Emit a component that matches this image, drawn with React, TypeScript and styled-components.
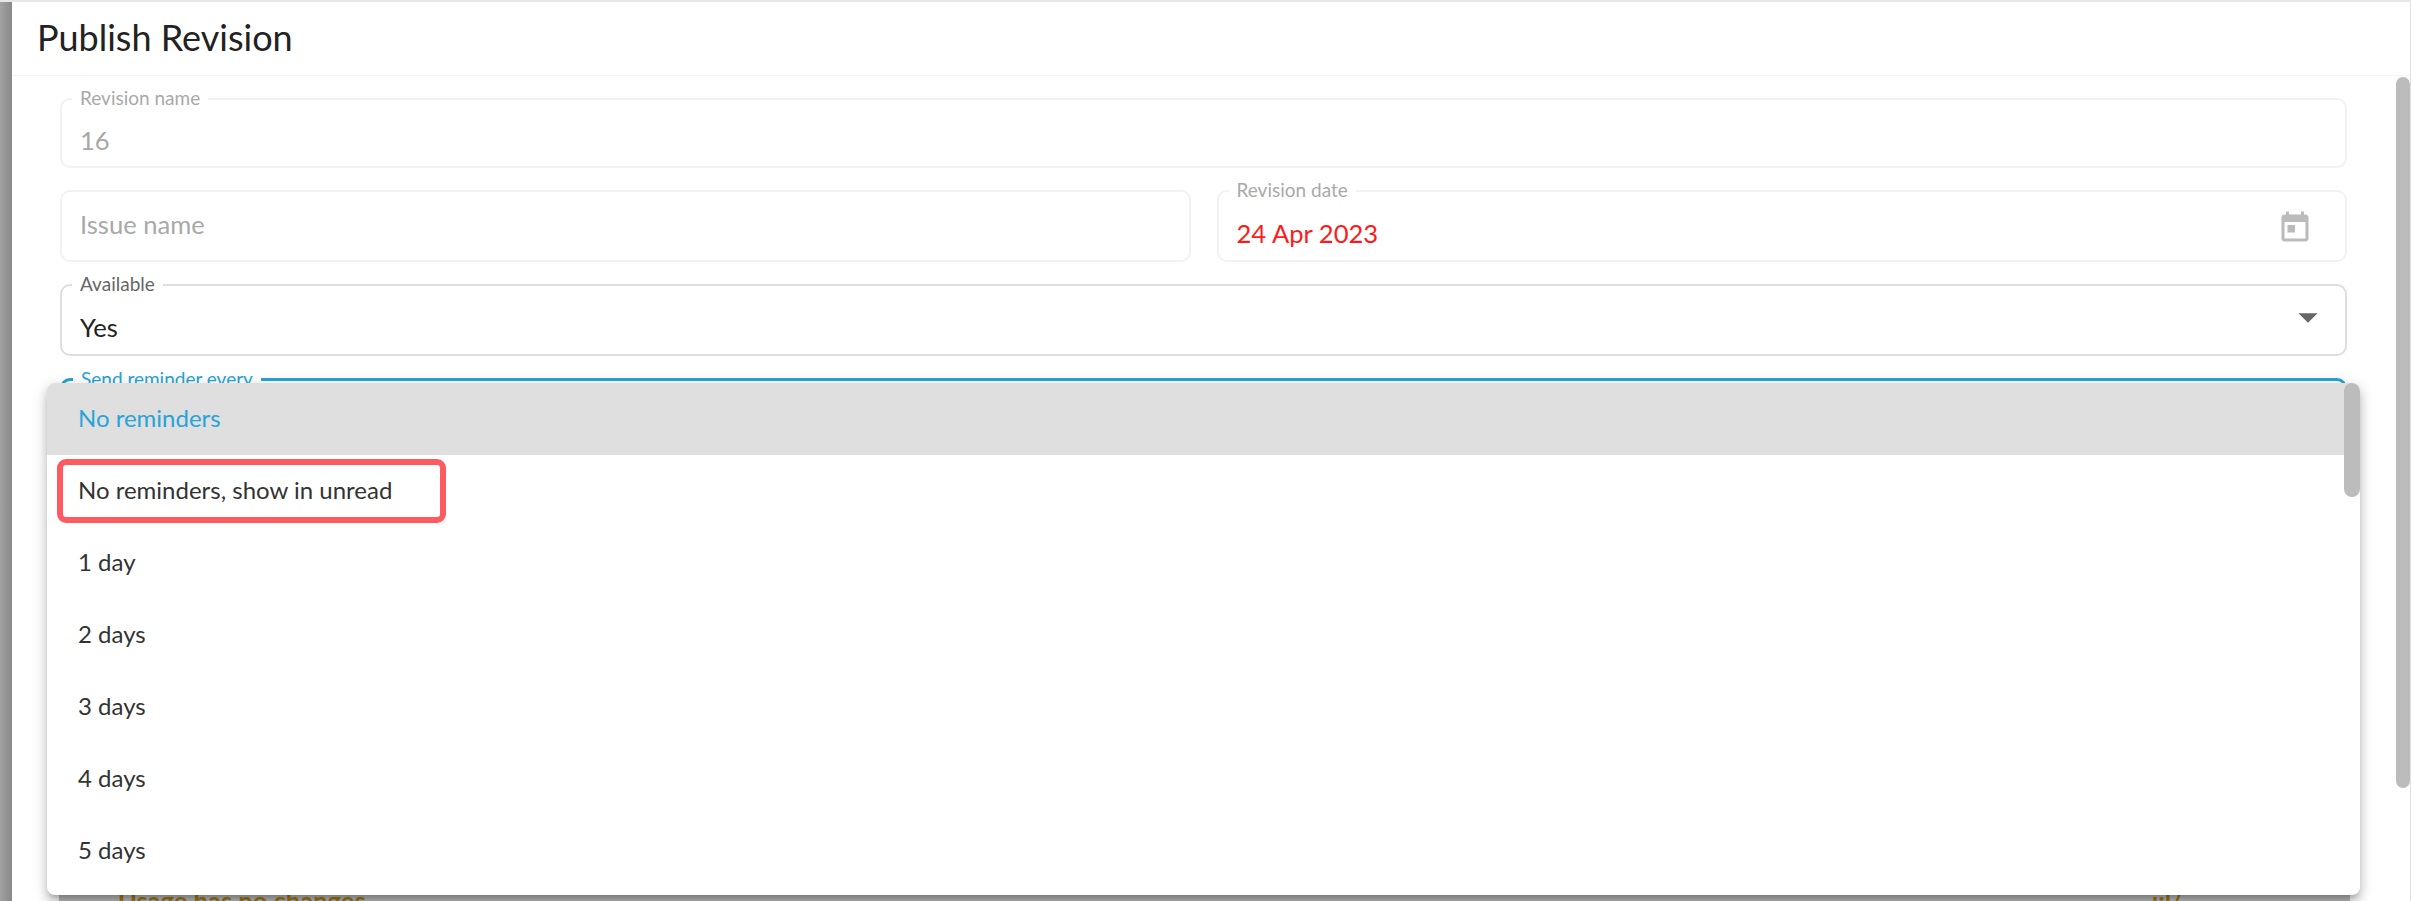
import React from 'react';
import styled, { createGlobalStyle } from 'styled-components';

const reminderOptions = ['No reminders', 'No reminders, show in unread', '1 day', '2 days', '3 days', '4 days', '5 days'];

const GlobalStyle = createGlobalStyle`
    html, body {
        margin: 0;
        height: 100%;
        overflow: hidden;
    }
    body {
        font-family: Lato, 'Open Sans', sans-serif;
    }
`;

const CalendarIcon = () => (
    <CalendarSvg viewBox="0 0 24 24">
        <path d="M19 3h-1V1h-2v2H8V1H6v2H5c-1.11 0-1.99.9-1.99 2L3 19c0 1.1.89 2 2 2h14c1.1 0 2-.9 2-2V5c0-1.1-.9-2-2-2zm0 16H5V8h14v11zM7 10h5v5H7z" />
    </CalendarSvg>
);

const ArrowIcon = () => (
    <ArrowSvg viewBox="0 0 24 24">
        <path d="M7 10l5 5 5-5z" />
    </ArrowSvg>
);

const App: React.FC = () => (
    <Page>
        <GlobalStyle />
        <Backdrop />
        <Dialog>
            <DialogHeader>Publish Revision</DialogHeader>
            <DialogBody>
                <Field $height={70} $tone="faint">
                    <FieldLabel $tone="faint">Revision name</FieldLabel>
                    <FieldValue $color="#a8a8a8">16</FieldValue>
                </Field>
                <Row>
                    <Field $tone="faint">
                        <Placeholder>Issue name</Placeholder>
                    </Field>
                    <Field $tone="faint">
                        <FieldLabel $tone="faint">Revision date</FieldLabel>
                        <FieldValue $color="#ff1a1a">24 Apr 2023</FieldValue>
                        <CalendarIcon />
                    </Field>
                </Row>
                <Field>
                    <FieldLabel>Available</FieldLabel>
                    <FieldValue $color="#222">Yes</FieldValue>
                    <ArrowIcon />
                </Field>
                <Field $tone="focus">
                    <FieldLabel $tone="focus">Send reminder every</FieldLabel>
                    <Menu>
                        {reminderOptions.map((option, index) => (
                            <MenuItem key={option} $selected={index === 0}>
                                {option}
                            </MenuItem>
                        ))}
                        <MenuThumb />
                        <Highlight />
                    </Menu>
                </Field>
                <Notice>
                    <span>Usage has no changes</span>
                    <span>i:l/</span>
                </Notice>
            </DialogBody>
            <DialogThumb />
        </Dialog>
    </Page>
);

export default App;

const Page = styled.div`
    display: flex;
    height: 100vh;
    box-sizing: border-box;
    padding-top: 2px;
    background: #e6e6e6;
`;

const Backdrop = styled.div`
    flex: 0 0 12px;
    background: linear-gradient(90deg, #a2a2a2, #888);
`;

const Dialog = styled.div`
    position: relative;
    flex: 1;
    display: flex;
    flex-direction: column;
    overflow: hidden;
    background: #fff;
    border-right: 1px solid #e2e2e2;
`;

const DialogHeader = styled.h2`
    flex: 0 0 74px;
    margin: 0;
    padding: 0 0 3px 25px;
    box-sizing: border-box;
    display: flex;
    align-items: center;
    border-bottom: 1px solid #f4f4f4;
    font-size: 36px;
    font-weight: 400;
    color: #222;
`;

const DialogBody = styled.div`
    display: flex;
    flex-direction: column;
    gap: 22px;
    padding: 22px 63px 0 48px;
`;

const DialogThumb = styled.div`
    position: absolute;
    top: 75px;
    right: 0;
    width: 14px;
    height: 711px;
    border-radius: 8px;
    background: #bcbcbc;
`;

const Row = styled.div`
    display: grid;
    grid-template-columns: 1fr 1fr;
    gap: 26px;
`;

const borders = { faint: '2px solid #f2f2f2', normal: '2px solid #dedede', focus: '3px solid #27a4d8' };
const labelColors = { faint: '#a9a9a9', normal: '#666', focus: '#27a4d8' };

type Tone = keyof typeof borders;

const Field = styled.div<{ $height?: number; $tone?: Tone }>`
    position: relative;
    display: flex;
    align-items: center;
    justify-content: space-between;
    box-sizing: border-box;
    height: ${p => p.$height ?? 72}px;
    padding: 0 18px;
    border: ${p => borders[p.$tone ?? 'normal']};
    border-radius: 10px;
`;

const FieldLabel = styled.label<{ $tone?: Tone }>`
    position: absolute;
    top: -13px;
    left: 10px;
    padding: 0 8px;
    background: #fff;
    font-size: 19px;
    line-height: 22px;
    color: ${p => labelColors[p.$tone ?? 'normal']};
`;

const FieldValue = styled.span<{ $color: string }>`
    padding-top: 14px;
    font-size: 25.6px;
    color: ${p => p.$color};
`;

const Placeholder = styled.span`
    padding-bottom: 4px;
    font-size: 25.6px;
    color: #a9a9a9;
`;

const CalendarSvg = styled.svg`
    width: 36px;
    height: 36px;
    margin: 4px 14px 0 0;
    fill: #bbb;
`;

const ArrowSvg = styled.svg`
    width: 46px;
    height: 46px;
    margin: 0 -4px 6px 0;
    fill: #666;
`;

const Menu = styled.div`
    position: absolute;
    top: 2px;
    left: -16px;
    right: -16px;
    padding-bottom: 8px;
    border-radius: 8px;
    background: #fff;
    box-shadow: 0 5px 5px -3px rgba(0, 0, 0, 0.2), 0 8px 10px 1px rgba(0, 0, 0, 0.14), 0 3px 14px 2px rgba(0, 0, 0, 0.12);
    overflow: hidden;
    z-index: 2;
`;

const MenuItem = styled.div<{ $selected?: boolean }>`
    display: flex;
    align-items: center;
    box-sizing: border-box;
    height: 72px;
    padding: 0 0 3px 31px;
    font-size: 24px;
    color: ${p => (p.$selected ? '#27a4d8' : '#333')};
    background: ${p => (p.$selected ? '#dfdfdf' : 'transparent')};
`;

const MenuThumb = styled.div`
    position: absolute;
    top: 0;
    right: 0;
    width: 16px;
    height: 114px;
    border-radius: 8px;
    background: #bcbcbc;
`;

const Highlight = styled.div`
    position: absolute;
    top: 76px;
    left: 10px;
    width: 389px;
    height: 64px;
    box-sizing: border-box;
    border: 6px solid #ff5a5f;
    border-radius: 9px;
`;

const Notice = styled.div`
    display: flex;
    justify-content: space-between;
    height: 40px;
    margin: 422px -3px 0 -1px;
    padding: 0 167px 0 59px;
    background: #bdbdbd;
    font-size: 25.5px;
    font-weight: 700;
    line-height: 0.5;
    color: #a37a10;
`;
